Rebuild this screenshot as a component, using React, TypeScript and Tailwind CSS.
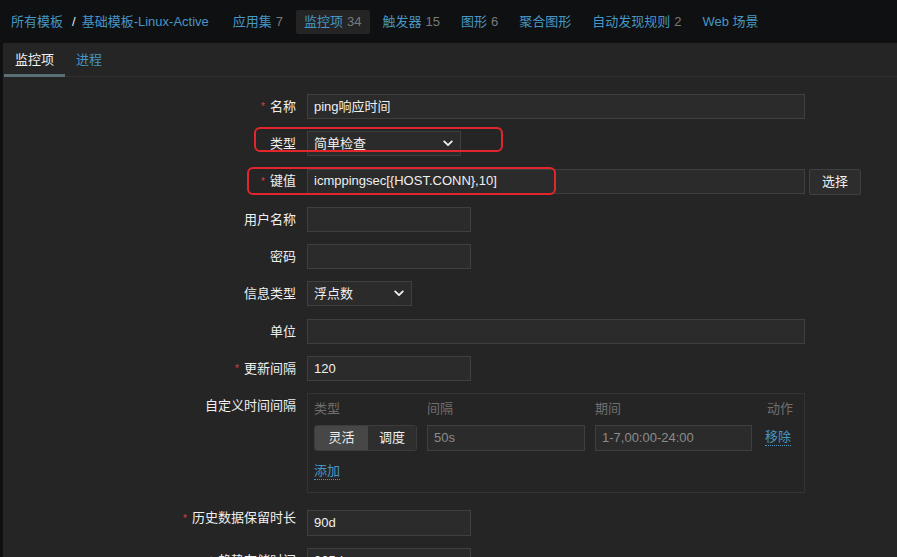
import React from "react";

const font = { fontFamily: '"Liberation Sans", "Noto Sans CJK SC", sans-serif' };

function Chevron() {
  return (
    <svg width="10" height="7" viewBox="0 0 10 7" className="shrink-0">
      <path d="M1.2 1.4 5 5.2 8.8 1.4" fill="none" stroke="#f2f2f2" strokeWidth="1.8" strokeLinecap="round" strokeLinejoin="round" />
    </svg>
  );
}

function Label({ text, required }: { text: string; required?: boolean }) {
  return (
    <div className="flex h-[25px] w-[293px] shrink-0 items-center justify-end text-[13px] text-[#f0f0f0]">
      {required && <span className="mr-[5px] text-[10px] text-[#d9404a]">*</span>}
      {text}
    </div>
  );
}

function Input({ value, w, muted }: { value?: string; w: string; muted?: boolean }) {
  return (
    <div className={`flex h-[25px] ${w} items-center border border-[#3f3f3f] bg-[#2b2b2b] px-[6px] text-[13px] ${muted ? "text-[#8c8c8c]" : "text-[#f0f0f0]"}`}>
      {value}
    </div>
  );
}

function Select({ value, w }: { value: string; w: string }) {
  return (
    <div className={`flex h-[25px] ${w} items-center justify-between border border-[#3f3f3f] bg-[#2b2b2b] pl-[6px] pr-[7px] text-[13px] text-[#f0f0f0]`}>
      <span>{value}</span>
      <Chevron />
    </div>
  );
}

function Row({ children }: { children: React.ReactNode }) {
  return <div className="relative flex items-start gap-[11px]">{children}</div>;
}

const nav = [
  { t: "应用集", n: "7" },
  { t: "监控项", n: "34", active: true },
  { t: "触发器", n: "15" },
  { t: "图形", n: "6" },
  { t: "聚合图形" },
  { t: "自动发现规则", n: "2" },
  { t: "Web 场景" },
];

export default function App() {
  return (
    <div className="h-[557px] w-full overflow-hidden bg-[#0f1012]" style={font}>
      <div className="flex h-[43px] items-center pl-[11px] text-[13px]">
        <span className="text-[#4796c4]">所有模板</span>
        <span className="ml-[9px] mr-[6px] text-[#e6e6e6]">/</span>
        <span className="text-[#4796c4]">基础模板-Linux-Active</span>
        <div className="ml-[16px] flex items-center gap-[5px]">
          {nav.map((i) => (
            <div key={i.t} className={`flex h-[24px] items-center rounded-[2px] px-[8px] ${i.active ? "bg-[#242424]" : ""}`}>
              <span className="text-[#4796c4]">{i.t}</span>
              {i.n && <span className="ml-[4px] text-[#7a7a7a]">{i.n}</span>}
            </div>
          ))}
        </div>
      </div>

      <div className="ml-[3px] h-[514px] bg-[#252525]">
        <div className="flex h-[34px] border-b border-[#303030] text-[13px]">
          <div className="relative ml-px flex items-center px-[11px] text-[#f2f2f2]">
            监控项
            <div className="absolute -bottom-px left-0 right-0 h-[3px] bg-[#5a6e76]" />
          </div>
          <div className="flex items-center px-[11px] text-[#4796c4]">进程</div>
        </div>

        <div className="flex flex-col gap-[12.3px] pt-[17px]">
          <Row>
            <Label text="名称" required />
            <Input value="ping响应时间" w="w-[498px]" />
          </Row>
          <Row>
            <Label text="类型" />
            <Select value="简单检查" w="w-[154px]" />
            <div className="pointer-events-none absolute left-[251px] top-[-4px] h-[25px] w-[249px] rounded-[6px] border-2 border-[#e3262b]" />
          </Row>
          <Row>
            <Label text="键值" required />
            <div className="flex gap-[4px]">
              <Input value="icmppingsec[{HOST.CONN},10]" w="w-[498px]" />
              <div className="flex h-[26px] w-[52px] items-center justify-center rounded-[2px] border border-[#404040] bg-[#2d2d2d] text-[13px] text-[#f0f0f0]">选择</div>
            </div>
            <div className="pointer-events-none absolute left-[244px] top-[-2px] h-[28px] w-[309px] rounded-[6px] border-2 border-[#e3262b]" />
          </Row>
          <Row>
            <Label text="用户名称" />
            <Input w="w-[164px]" />
          </Row>
          <Row>
            <Label text="密码" />
            <Input w="w-[164px]" />
          </Row>
          <Row>
            <Label text="信息类型" />
            <Select value="浮点数" w="w-[105px]" />
          </Row>
          <Row>
            <Label text="单位" />
            <Input w="w-[498px]" />
          </Row>
          <Row>
            <Label text="更新间隔" required />
            <Input value="120" w="w-[164px]" />
          </Row>
          <Row>
            <div className="w-[293px] shrink-0 pt-[3px] text-right text-[13px] text-[#f0f0f0]">自定义时间间隔</div>
            <div className="h-[100px] w-[498px] border border-[#333333] px-[6px] pt-[5px] text-[13px]">
              <div className="grid grid-cols-[103px_158px_157px_1fr] gap-x-[10px] text-[#6f6f6f]">
                <span>类型</span>
                <span>间隔</span>
                <span>期间</span>
                <span className="pr-[5px] text-right">动作</span>
              </div>
              <div className="mt-[6px] grid grid-cols-[103px_158px_157px_1fr] items-center gap-x-[10px]">
                <div className="flex h-[26px] overflow-hidden rounded-[3px] border border-[#3c3c3c] text-[#f0f0f0]">
                  <div className="flex w-[53px] items-center justify-center bg-[#474747]">灵活</div>
                  <div className="flex flex-1 items-center justify-center bg-[#2e2e2e]">调度</div>
                </div>
                <Input value="50s" w="w-[158px] h-[26px]" muted />
                <Input value="1-7,00:00-24:00" w="w-[157px] h-[26px]" muted />
                <span className="ml-[3px] w-fit border-b border-dotted border-[#4796c4] leading-[16px] text-[#4796c4]">移除</span>
              </div>
              <span className="mt-[12px] inline-block border-b border-dotted border-[#4796c4] leading-[16px] text-[#4796c4]">添加</span>
            </div>
          </Row>
          <Row>
            <Label text="历史数据保留时长" required />
            <div className="pt-[4px]">
              <Input value="90d" w="w-[164px] h-[26px]" />
            </div>
          </Row>
          <Row>
            <Label text="趋势存储时间" required />
            <Input value="365d" w="w-[164px] h-[26px]" />
          </Row>
        </div>
      </div>
    </div>
  );
}
